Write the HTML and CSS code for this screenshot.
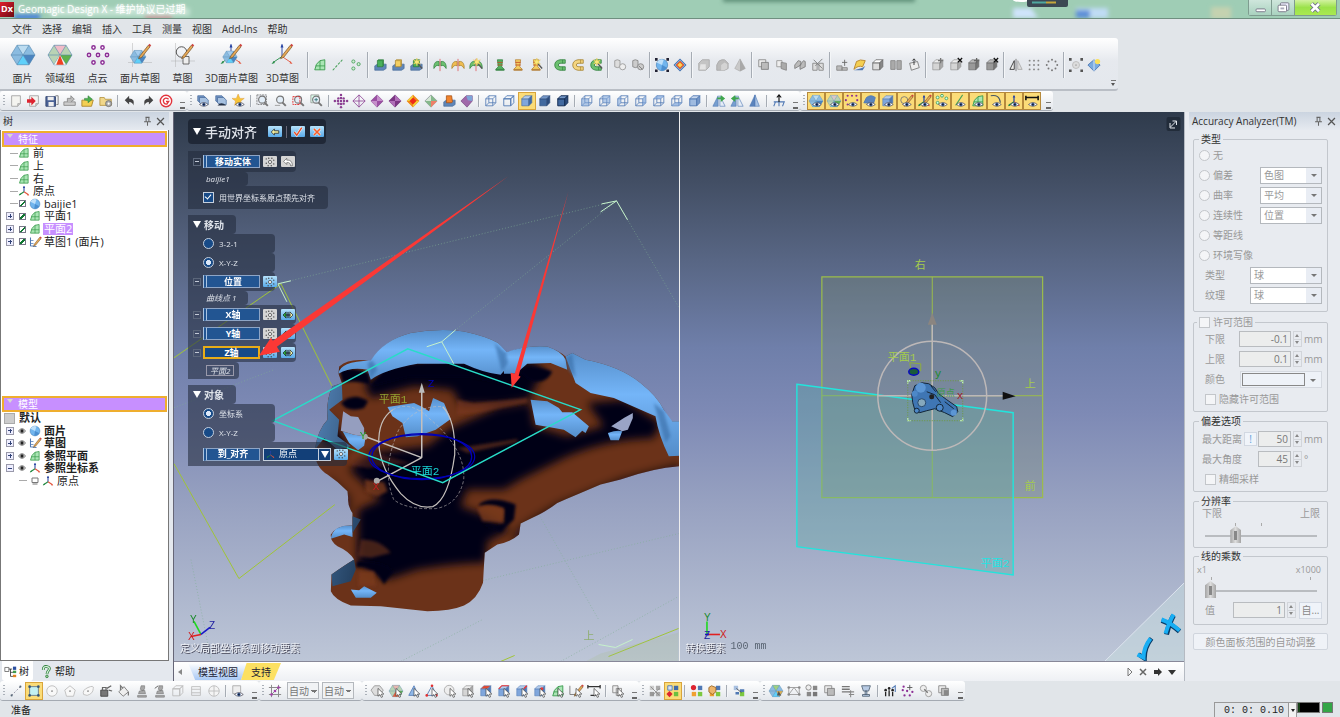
FILE: index.html
```html
<!DOCTYPE html>
<html lang="zh-CN">
<head>
  <title>Geomagic Design X</title>
  <meta charset="UTF-8" />
  <link rel="stylesheet" href="styles.css">
</head>
<body>
  <header class="titlebar">
    <svg class="titlebar-glass" viewBox="0 0 1340 18" preserveAspectRatio="xMaxYMin slice">
      <defs><filter id="soft"><feGaussianBlur stdDeviation="2"/></filter></defs>
      <g filter="url(#soft)">
        <rect x="723" y="-4" width="192" height="6" fill="#5f8f78"/>
        <rect x="14" y="14" width="26" height="6" fill="#4a83d8"/>
        <rect x="145" y="13" width="27" height="6" fill="#d06a80"/>
        <path d="M50 8h140v8H50z" fill="#c2e2d2"/>
        <path d="M1013 8h18l7 10h-25z" fill="#cfe4fb"/>
        <path d="M1076 8h32v10h-32z" fill="#c0dcf5"/>
        <path d="M1076 10h14v8h-14z" fill="#5b8ed8"/>
        <path d="M1211 7h20v12h-20z" fill="#c5d2b0"/>
      </g>
      <ellipse cx="1021" cy="0" rx="8" ry="2" fill="#fff"/>
      <rect x="1027" y="-3" width="41" height="10" rx="2" fill="#3c4853"/>
      <path d="M1032 2.500h14" stroke="#4fa8a0" stroke-width="2"/>
      <path d="M1046 2.500h10" stroke="#c5a63c" stroke-width="2"/>
    </svg>
    <span class="app-logo">Dx</span>
    <h1>Geomagic Design X - 维护协议已过期</h1>
    <div class="win-buttons">
      <button aria-label="最小化"><svg viewBox="0 0 24 16"><rect x="7.500" y="9.500" width="10" height="3" rx="1" fill="#fff" stroke="#778"/></svg></button>
      <button aria-label="还原"><svg viewBox="0 0 24 16"><rect x="9" y="3" width="9" height="8" rx="1" fill="#eef" stroke="#778"/><rect x="6.500" y="5.500" width="9" height="7" rx="1" fill="#fff" stroke="#778"/><rect x="9" y="8" width="4" height="2" fill="#aab"/></svg></button>
      <button class="close" aria-label="关闭"><svg viewBox="0 0 24 16"><path d="M8 4l8 8M16 4l-8 8" stroke="#668" stroke-width="4.500"/><path d="M8 4l8 8M16 4l-8 8" stroke="#fff" stroke-width="2.800"/></svg></button>
    </div>
  </header>

  <nav class="menubar">
    <a href="#">文件</a><a href="#">选择</a><a href="#">编辑</a><a href="#">插入</a><a href="#">工具</a><a href="#">测量</a><a href="#">视图</a><a href="#">Add-Ins</a><a href="#">帮助</a>
  </nav>

  <div class="ribbon">
    <button class="big"><i data-icon="mesh"></i>面片</button>
    <button class="big"><i data-icon="regions"></i>领域组</button>
    <button class="big"><i data-icon="cloud"></i>点云</button>
    <button class="big"><i data-icon="meshSketch"></i>面片草图</button>
    <button class="big"><i data-icon="sketch"></i>草图</button>
    <button class="big"><i data-icon="meshSketch3d"></i>3D面片草图</button>
    <button class="big"><i data-icon="sketch3d"></i>3D草图</button>
    <div class="tools" data-icons="| plane vector points | extrude extrudeY extrudeWand | revolve revolveY revolveWand | loft loftY loftWand | sweep sweepY sweepWand | boolA boolB | fit target | chamfer fillet draft | union cut join trim | add surf shell split wrap | move delFace moveD delFaceD | mirror grid ring | bound diamondStar"></div>
    <span class="more"></span>
  </div>

  <div class="toolbar-row">
    <div class="bar" data-icons="page import save exportG open folderGear | undo redo refreshG"></div>
    <div class="bar" data-icons="layersEye layersHide starEye | zoomFit zoomOut zoomArea zoomIn | crossDots diaWire diaShade diaDark diaHeat diaCurv boxOr boxPu | wire hidden *shade shadeDark shadeEdge | vFront vBack vLeft vRight vTop vBottom vIso | flipA flipB flipC | normal"></div>
    <div class="bar lit" data-icons="*eMesh *eRegion *eCloud *eSurf *eSolid *eSketch *eSketch3 *ePoints *eLine *ePlane *eCurve *eAxis *eRuler"></div>
  </div>

  <main>
    <aside class="tree-panel">
      <h2 class="panel-head">树<span class="head-btns"><i data-icon="pin"></i><i data-icon="cross"></i></span></h2>
      <div class="tree-body">
        <h3 class="tree-head">特征</h3>
        <ul class="tree features">
          <li><b class="line"></b><i data-icon="plane"></i>前</li>
          <li><b class="line"></b><i data-icon="plane"></i>上</li>
          <li><b class="line"></b><i data-icon="plane"></i>右</li>
          <li><b class="line"></b><i data-icon="axis"></i>原点</li>
          <li><b class="line"></b><input type="checkbox" aria-label="baijie1" checked><i data-icon="ball"></i>baijie1</li>
          <li><b class="plus"></b><input type="checkbox" aria-label="平面1" checked><i data-icon="plane"></i>平面1</li>
          <li><b class="plus"></b><input type="checkbox" aria-label="平面2" checked><i data-icon="plane"></i><span class="sel">平面2</span></li>
          <li><b class="plus"></b><input type="checkbox" aria-label="草图1" checked><i data-icon="pen"></i>草图1 (面片)</li>
        </ul>
        <h3 class="tree-head">模型</h3>
        <ul class="tree models">
          <li class="root"><b class="box"></b>默认</li>
          <li><b class="plus"></b><i class="eye" data-icon="eyeSm"></i><i data-icon="ball"></i>面片</li>
          <li><b class="plus"></b><i class="eye" data-icon="eyeSm"></i><i data-icon="pen"></i>草图</li>
          <li><b class="plus"></b><i class="eye" data-icon="eyeSm"></i><i data-icon="plane"></i>参照平面</li>
          <li><b class="plus open"></b><i class="eye" data-icon="eyeSm"></i><i data-icon="axis"></i>参照坐标系</li>
          <li class="child"><b class="line"></b><i class="eye" data-icon="eyeOff"></i><i data-icon="axis"></i>原点</li>
        </ul>
      </div>
      <div class="side-tabs">
        <button class="on"><i data-icon="treeTab"></i>树</button>
        <button><i data-icon="help"></i>帮助</button>
      </div>
    </aside>

    <section class="center">
      <div class="views">
        <div class="view">
          <svg class="scene" viewBox="173 112 505 550" preserveAspectRatio="xMinYMin slice">
            <defs>
              <linearGradient id="steel" x1="0" y1="0" x2="0" y2="1"><stop offset="0" stop-color="#5790cc"/><stop offset=".4" stop-color="#74b5f8"/><stop offset="1" stop-color="#548dc9"/></linearGradient>
              <linearGradient id="steelDark" x1="0" y1="0" x2="1" y2="1"><stop offset="0" stop-color="#5484b8"/><stop offset="1" stop-color="#1f3a58"/></linearGradient>
              <filter id="shade" x="-10%" y="-10%" width="120%" height="120%"><feGaussianBlur stdDeviation="12"/></filter>
              <filter id="crease" x="-10%" y="-10%" width="120%" height="120%"><feGaussianBlur stdDeviation="4"/></filter>
              <clipPath id="body"><path id="bodyPath" d="M203 612L205 590Q240 562 300 575Q340 510 420 490Q500 475 580 485Q650 500 682 520L706 550Q760 525 830 530Q870 545 885 560L905 550L945 570Q1050 590 1110 640Q1160 680 1180 720L1200 755H1228V890Q1150 895 1050 930L990 945Q920 975 860 1000Q820 1030 790 1042L750 1062L745 1095Q720 1118 680 1125L642 1150L637 1240Q620 1290 580 1308Q540 1325 470 1325L330 1310L240 1308Q190 1290 180 1265L182 1215Q220 1188 250 1170Q235 1145 200 1130Q178 1115 180 1095Q200 1065 245 1068V1030Q230 1010 232 985L230 965Q200 935 170 915Q130 890 132 840Q140 780 170 750Q165 690 185 650L213 640Z"/></clipPath>
            </defs>
            <g fill="none" stroke="#7fae93" stroke-width="1" stroke-dasharray="1 2" opacity=".6">
              <path d="M277 284L616 201L678 307M440 342L616 201M440 342L598 620M173 408L273 370M482 581L678 534M190 560L210 660M560 662L678 597M400 662L482 620"/>
            </g>
            <path d="M173 358L280 284L331 386M173 464L238 579L334 505M500 662L514 656M608 657L678 629" fill="none" stroke="#a0c535"/>
            <path d="M600 654L678 633V662H585z" fill="#a5bd80" opacity=".2"/>
            <path d="M277 284L290 281M277 284L286 302M600 212L616 201L627 220M616 201L601 204M598 645L615 648L632 640" fill="none" stroke="#c6f2cb"/>
            <g transform="translate(270 170) scale(.3333)">
              <use href="#bodyPath" fill="#6b3219"/>
              <g clip-path="url(#body)">
                <g filter="url(#shade)" fill="#040414">
                  <path d="M340 610Q430 570 580 578L690 608L780 570L820 600L775 690L690 705H570L545 660L430 650L300 685L280 640Z"/>
                  <path d="M540 775L680 715L780 700L790 770L890 800L1000 770L950 700L1060 690L1170 760L1150 805Q1000 810 880 865L750 930L700 960L590 960L570 1010L640 1035L720 1080L650 1115L645 1180Q560 1180 440 1200L350 1230L260 1180L262 1020L330 990L235 900L300 850L470 830Z"/>
                  <path d="M180 740L205 790L240 840L150 830Z"/>
                  <path d="M1228 880L1050 925L860 1000L790 1042L740 1075L720 1130L800 1100L1228 940Z" opacity=".6"/>
                  <path d="M170 915L240 980L240 1040L190 1000Z" opacity=".5"/>
                </g>
                <g filter="url(#crease)" fill="#040414">
                  <path d="M340 600Q430 574 580 582L690 612L740 585L735 640L690 640L590 620H420L300 650Z"/>
                  <path d="M205 598Q250 592 295 610L298 645Q250 630 215 640Z"/>
                  <path d="M210 700Q250 665 292 695L280 715Q250 725 225 715Z"/>
                  <path d="M625 1005Q660 975 735 1005L730 1050L690 1088L635 1065Q670 1070 700 1062L700 1015Q660 1000 625 1010Z"/>
                  <path d="M258 1175Q330 1172 368 1205L340 1245L318 1212Q285 1185 255 1195Z"/>
                  <path d="M750 600Q800 585 845 605Q830 640 790 635Q760 625 750 600Z"/>
                </g>
                <g fill="#7a3a1e" opacity=".8" filter="url(#crease)">
                  <path d="M560 690L610 700L770 685V700L620 730L560 735Z" opacity=".8"/>
                  <path d="M560 835L740 808L740 818L590 850Z" opacity=".7"/>
                  <path d="M620 1015Q660 1000 700 1020L695 1058L635 1055Z"/>
                  <path d="M282 930L340 938L350 965L320 980L285 968Z"/>
                  <path d="M245 850L300 845L420 880L290 895L230 885Z" opacity=".5"/>
                  <path d="M265 1205L310 1205L315 1250L262 1250Z"/>
                  <path d="M270 1110Q330 1110 360 1150L300 1165L262 1160Z" opacity=".7"/>
                </g>
              </g>
              <g fill="url(#steel)">
                <path d="M203 612Q205 575 300 572Q340 510 420 490Q500 475 580 485Q650 500 682 520L710 550L715 585L690 615Q640 610 580 582H440Q340 600 300 630L290 600Q240 590 203 612Z"/>
                <path d="M700 550Q760 525 830 530Q875 545 885 570L890 600L840 580L770 582L735 612H700Z"/>
                <path d="M885 560L905 550L945 570Q1050 590 1110 640Q1160 680 1180 720L1205 755H1228V858L1195 860Q1165 800 1155 740Q1110 720 1030 685L960 670L915 640Z"/>
                <path d="M350 712L430 700L455 712L475 725L487 685L520 700L540 748L495 780L440 800L405 803L395 760L365 740Z"/>
                <path d="M780 690L830 695L865 715L875 728L905 728L955 770L945 790L935 783L915 803L880 780L795 765Z"/>
                <path d="M1012 790Q1040 780 1055 785L1045 812L1020 812Z"/>
                <path d="M215 785L250 795L285 800L280 828L262 842L235 820Z"/>
                <path d="M240 1260L265 1262L280 1250L318 1270L300 1285H255Z"/>
                <path d="M180 1108Q185 1065 245 1068V1102L220 1095Z"/>
              </g>
              <g fill="#3d72ac" filter="url(#crease)" opacity=".7">
                <path d="M290 580L305 572L320 600L300 625ZM672 520L706 550L712 580L694 606Z"/>
                <path d="M885 565L905 552L915 625L895 600ZM1150 700L1180 725L1200 800L1185 820Z"/>
              </g>
              <path d="M132 840Q140 780 170 750Q165 690 185 650L213 640L215 690L175 720L205 750L200 800L240 830L200 840L160 805ZM182 1215Q220 1188 250 1170L255 1200L240 1235L185 1250ZM245 1040L270 1050L245 1090Z" fill="url(#steelDark)"/>
              <path d="M217 725L240 740L262 742L280 775V800L250 795L210 783Z" fill="#959ebf"/>
              <path d="M1087 730V745L1072 780L1055 785L1022 770L1060 745Z" fill="#9aa4c6"/>
            </g>
            <path d="M426 347L441 342L455 330M441 342L453 364" fill="none" stroke="#c6f2cb"/>
            <g fill="none" stroke="#c5c0bd" stroke-width="1.500">
              <path d="M421 458V390M421 458L365 437M421 458L376 482"/>
              <path d="M392 410Q377 420 378 445Q380 470 400 494Q415 510 432 507Q448 500 454 455Q455 420 442 407" stroke-width="1.200"/>
              <path d="M392 410Q410 400 430 420Q465 450 463 480Q458 505 435 509Q405 510 393 500Q380 470 398 430Q415 405 442 407" stroke-width="1" stroke-dasharray="3 2" opacity=".6"/>
            </g>
            <g fill="none" stroke="#0000b8" stroke-width="1.200"><ellipse cx="421" cy="457" rx="53" ry="22"/><ellipse cx="421" cy="457" rx="50" ry="23"/></g>
            <path d="M421 383l3 10h-6z" fill="#bbb"/><circle cx="364" cy="437" r="3" fill="#aaa"/><circle cx="376" cy="481" r="3" fill="#aaa"/>
            <path d="M272 421L407 349L580 410L442 483Z" fill="none" stroke="#28dcc8" stroke-width="1.400"/>
            <g class="tag">
              <text x="378" y="403" fill="#93a332">平面1</text>
              <text x="410" y="475" fill="#18d8da">平面2</text>
              <text x="583" y="641" fill="#8fae72">上</text>
              <text x="427" y="387" fill="#0000b8">Z</text>
              <text x="359" y="439" fill="#22a030">Y</text>
              <text x="372" y="490" fill="#c02020">X</text>
            </g>
            <g fill="none" stroke-width="1.600"><path d="M200 635L193 622" stroke="#1ed81e"/><path d="M200 635L190 637" stroke="#e02020"/><path d="M200 635L209 628" stroke="#1818c8"/></g>
            <g class="tag small"><text x="189" y="624" fill="#188a28">Y</text><text x="187" y="641" fill="#d01818">X</text><text x="208" y="630" fill="#1c1ca0">Z</text></g>
          </svg>

          <form class="align">
            <div class="r title"><span class="tri"></span><strong>手动对齐</strong><button type="button" class="mini blue" aria-label="返回"><i data-icon="back"></i></button><em class="bar-sep"></em><button type="button" class="mini blue" aria-label="确定"><i data-icon="ok"></i></button><button type="button" class="mini blue" aria-label="取消"><i data-icon="no"></i></button></div>
            <div class="group">
              <div class="r w2 h20"><span class="fold"></span><button type="button" class="slot">移动实体</button><button type="button" class="mini" aria-label="清除"><i data-icon="dots"></i></button><button type="button" class="mini" aria-label="撤消"><i data-icon="curl"></i></button></div>
              <div class="r w0 note">baijie1</div>
              <label class="r w3 h23"><input type="checkbox" checked>用世界坐标系原点预先对齐</label>
            </div>
            <div class="group">
              <div class="r w0 head"><span class="tri"></span><strong>移动</strong></div>
              <label class="r w1"><input type="radio" name="mv">3-2-1</label>
              <label class="r w1"><input type="radio" name="mv" checked>X-Y-Z</label>
              <div class="r w1"><span class="fold"></span><button type="button" class="slot">位置</button><button type="button" class="mini blue" aria-label="清除"><i data-icon="dots"></i></button></div>
              <div class="r w0 note">曲线点 1</div>
              <div class="r w2"><span class="fold"></span><button type="button" class="slot">X轴</button><button type="button" class="mini" aria-label="清除"><i data-icon="dots"></i></button><button type="button" class="mini blue" aria-label="反转"><i data-icon="swap"></i></button></div>
              <div class="r w2"><span class="fold"></span><button type="button" class="slot">Y轴</button><button type="button" class="mini" aria-label="清除"><i data-icon="dots"></i></button><button type="button" class="mini blue" aria-label="反转"><i data-icon="swap"></i></button></div>
              <div class="r w2"><span class="fold"></span><button type="button" class="slot focus">Z轴</button><button type="button" class="mini blue" aria-label="清除"><i data-icon="dots"></i></button><button type="button" class="mini blue" aria-label="反转"><i data-icon="swap"></i></button></div>
              <div class="r w0 note last"><span>平面2</span></div>
            </div>
            <div class="group">
              <div class="r w0 head"><span class="tri"></span><strong>对象</strong></div>
              <label class="r w1"><input type="radio" name="obj" checked>坐标系</label>
              <label class="r w1"><input type="radio" name="obj">X-Y-Z</label>
              <div class="r w4"><span class="fold none"></span><button type="button" class="slot">到_对齐</button><span class="pick"><i data-icon="axis"></i><select aria-label="到_对齐"><option>原点</option></select></span><button type="button" class="mini blue" aria-label="清除"><i data-icon="dots"></i></button></div>
            </div>
          </form>

          <svg class="scene over" viewBox="173 112 505 550" preserveAspectRatio="xMinYMin slice">
            <g fill="#fb3835"><path d="M508 176L272 341L270 338L258 356L279 352L276 347Z"/><path d="M568 191L514 374L510 373L511 388L520 377L518 376Z"/></g>
          </svg>
          <p class="hint">定义局部坐标系到移动要素</p>
        </div>

        <div class="view">
          <svg class="scene" viewBox="679 112 505 550" preserveAspectRatio="xMidYMin slice">
            <path d="M821 277H1042V498H821Z" fill="#7f8f68" fill-opacity=".27" stroke="#9cbd4a" stroke-width="1.200"/>
            <path d="M931.500 277V498M821 396H1042" stroke="#9cbd4a"/>
            <path d="M796 384.500L1012.500 413V575.500L796 547Z" fill="#58b0a0" fill-opacity=".3" stroke="#22e4dc" stroke-width="1.400"/>
            <g fill="none" stroke="#bdb8b8" stroke-width="1.500"><circle cx="931.500" cy="396" r="54.500"/><path d="M931.500 321V451M877 396H1005"/></g>
            <path d="M931.500 313l4.500 12h-9z" fill="#8a8580"/><path d="M1002 392v8l13-3.500z" fill="#111"/>
            <g>
              <path d="M911 395L914 386L921 383L928 384L934 388L938 394L946 400L956 407L957 412L952 417L944 413L934 409L926 411L919 413L914 410L912 403Z" fill="#3f76b4" stroke="#142638"/>
              <circle cx="920" cy="388" r="5" fill="#5c96d4"/><circle cx="914" cy="394" r="3" fill="#4d88c8"/><circle cx="921" cy="403" r="4" fill="#85a8bd" stroke="#27486c"/><circle cx="939" cy="408" r="3.500" fill="#4d88c8" stroke="#142638"/><circle cx="916" cy="411" r="2.500" fill="#4d88c8" stroke="#142638"/>
              <circle cx="953" cy="413" r="3" fill="#5c96d4"/><path d="M926 392l8 3 6 8M930 386l5 6M944 402l9 7" stroke="#142638" fill="none"/><circle cx="931" cy="397" r="2.500" fill="#222"/>
            </g>
            <path d="M907 384v-3h3M959 381h3v3M962 418v3h-3M910 421h-3v-3" fill="none" stroke="#c6f2cb" stroke-width="1.300"/>
            <path d="M907 381H962V421H907Z" fill="none" stroke="#6d9a3c" stroke-dasharray="1 1.500"/>
            <path d="M909 363l11 1v7l-10-1z" fill="none" stroke="#8fae3c"/><ellipse cx="913" cy="372" rx="5" ry="3.500" fill="#1a5a3a" stroke="#0808c0" stroke-width="1.500"/>
            <g class="tag">
              <text x="914" y="269" fill="#a5cc4c">右</text><text x="1024" y="388" fill="#a5cc4c">上</text><text x="1024" y="490" fill="#a5cc4c">前</text>
              <text x="887" y="361" fill="#a5cc4c">平面1</text><text x="980" y="567" fill="#22e4e4">平面2</text>
              <text class="org" x="936" y="396" fill="#3f9a4c">原点</text><text x="934" y="377" fill="#188a28">y</text><text x="956" y="399" fill="#a01c28">x</text>
            </g>
            <g fill="none" stroke-width="1.600"><path d="M706 635V622" stroke="#1ed81e"/><path d="M706 635H719" stroke="#e02020"/><path d="M704 635h4" stroke="#1818c8"/></g>
            <g class="tag small"><text x="703" y="622" fill="#188a28">Y</text><text x="719" y="639" fill="#d01818">X</text><text x="703" y="640" fill="#1c1ca0">Z</text></g>
            <path d="M1184 583V662H1104Z" fill="#c6dadf" opacity=".55"/><path d="M1184 583L1104 662" stroke="#dde4ee"/>
            <path d="M1161 621Q1170 624 1179 632M1173 616Q1168 625 1166 635" stroke="#083a66" stroke-width="5" fill="none"/><path d="M1161 620Q1170 623 1179 631M1173 615Q1168 624 1165 634" stroke="#18aef4" stroke-width="4" fill="none"/>
            <path d="M1138 655L1144 659Q1144 648 1151 639" stroke="#083a66" stroke-width="4.500" fill="none"/><path d="M1137 655L1143 658Q1143 648 1150 639" stroke="#18aef4" stroke-width="4" fill="none"/>
            <rect x="1166" y="117" width="14" height="14" rx="2" fill="#222c3a"/><path d="M1170 127l6-6M1172 121h4v4M1169.500 123v5h5" stroke="#e4e8ee" fill="none"/>
          </svg>
          <p class="hint">转换要素<span>100 mm</span></p>
        </div>
      </div>
      <div class="doc-tabs">
        <span class="nav-l"></span>
        <button class="model">模型视图</button>
        <button class="support">支持</button>
        <svg viewBox="0 0 54 12"><path d="M3 2v8l4-4z" fill="none" stroke="#777"/><path d="M15 3l6 6M21 3l-6 6" stroke="#666" stroke-width="1.500"/><path d="M29 4h4V2l4 4-4 4V8h-4z" fill="#333"/><path d="M43 4h8l-4 5z" fill="#333"/></svg>
      </div>
    </section>

    <aside class="analyzer">
      <h2 class="panel-head">Accuracy Analyzer(TM)<span class="head-btns"><i data-icon="pin"></i><i data-icon="cross"></i></span></h2>
      <form>
        <fieldset>
          <legend>类型</legend>
          <div class="row"><label><input type="radio" name="t" disabled>无</label></div>
          <div class="row"><label><input type="radio" name="t" disabled>偏差</label><span class="combo"><select aria-label="偏差" disabled><option>色图</option></select></span></div>
          <div class="row"><label><input type="radio" name="t" disabled>曲率</label><span class="combo"><select aria-label="曲率" disabled><option>平均</option></select></span></div>
          <div class="row"><label><input type="radio" name="t" disabled>连续性</label><span class="combo"><select aria-label="连续性" disabled><option>位置</option></select></span></div>
          <div class="row"><label><input type="radio" name="t" disabled>等距线</label></div>
          <div class="row"><label><input type="radio" name="t" disabled>环境写像</label></div>
          <div class="row in"><label for="envType">类型</label><span class="combo wide"><select id="envType" disabled><option>球</option></select></span></div>
          <div class="row in"><label for="envTex">纹理</label><span class="combo wide"><select id="envTex" disabled><option>球</option></select></span></div>
        </fieldset>
        <fieldset class="allow">
          <legend class="dim"><label><input type="checkbox" disabled>许可范围</label></legend>
          <div class="row in"><label for="lo">下限</label><span class="num w52"><input id="lo" value="-0.1" disabled><b class="spin"></b></span><span class="unit">mm</span></div>
          <div class="row in"><label for="hi">上限</label><span class="num w52"><input id="hi" value="0.1" disabled><b class="spin"></b></span><span class="unit">mm</span></div>
          <div class="row in"><label for="col">颜色</label><span class="combo color"><button type="button" id="col" aria-label="颜色" disabled></button></span></div>
          <div class="row in"><label><input type="checkbox" disabled>隐藏许可范围</label></div>
        </fieldset>
        <fieldset class="dev">
          <legend>偏差选项</legend>
          <div class="row mid"><label for="dist">最大距离</label><button type="button" class="bang" disabled>!</button><span class="num w33"><input id="dist" value="50" disabled><b class="spin"></b></span><span class="unit">mm</span></div>
          <div class="row mid"><label for="ang">最大角度</label><span class="num w33"><input id="ang" value="45" disabled><b class="spin"></b></span><span class="unit">°</span></div>
          <div class="row in"><label><input type="checkbox" disabled>精细采样</label></div>
        </fieldset>
        <fieldset class="res">
          <legend>分辨率</legend>
          <div class="ends"><span>下限</span><span>上限</span></div>
          <input type="range" aria-label="分辨率" value="25" disabled>
        </fieldset>
        <fieldset class="mult">
          <legend>线的乘数</legend>
          <div class="ends far"><span>x1</span><span>x1000</span></div>
          <input type="range" aria-label="线的乘数" value="0" disabled>
          <div class="row in"><label for="val">值</label><span class="num w52"><input id="val" value="1" disabled><b class="spin"></b></span><button type="button" class="auto" disabled>自...</button></div>
        </fieldset>
        <button type="button" class="adjust" disabled>颜色面板范围的自动调整</button>
      </form>
    </aside>
  </main>

  <div class="toolbar-row bottom">
    <div class="bar" data-icons="segment *rect circleG polyG ellipseG spray bucket stampA stampB cubeG cylG ballG | pageEye"></div>
    <div class="bar filter"><button class="tool" aria-label="过滤"><i data-icon="filter"></i></button><select class="auto-sel" aria-label="过滤一"><option>自动</option></select><select class="auto-sel" aria-label="过滤二"><option>自动</option></select></div>
    <div class="bar" data-icons="cMesh cRegion cTri cTriR cBall cBox cFace cEdge cLine cPoint cPlane cPen cRuler | cPages"></div>
    <div class="bar" data-icons="sqOff *sqOn | sqRed sqHand | sqTree"></div>
    <div class="bar" data-icons="meshBall nodes sqG union list cup | bars cloudM linkG cutG"></div>
  </div>

  <footer class="status">
    <span>准备</span>
    <div class="clock"><output>0: 0: 0.10</output><button aria-label="选项"></button></div>
    <span class="meter"></span><span class="meter green"></span>
  </footer>

  <script src="icons.js"></script>
</body>
</html>
```
FILE: styles.css
```css
* { box-sizing: border-box; }
body {
  margin: 0; height: 100vh; display: flex; flex-direction: column; overflow: hidden;
  background: #e1e5e9; color: #222; font: 10px/12px "Open Sans", "Noto Sans CJK SC", sans-serif;
}
button, input, select { font: inherit; color: inherit; margin: 0; }
button { border: 0; padding: 0; background: none; white-space: nowrap; }
h1, h2, h3, p, ul { margin: 0; padding: 0; font-weight: normal; font-size: 10px; }
i { display: block; flex: none; width: 14px; height: 14px; }
i svg { display: block; width: 100%; height: 100%; overflow: visible; }

/* title bar */
.titlebar { position: relative; display: flex; align-items: center; height: 19px; flex: none; background: #9fcdb5; border-bottom: 1px solid #6f8f80; overflow: hidden; }
.titlebar-glass { position: absolute; top: 0; left: 0; width: 100%; height: 18px; }
.app-logo { position: relative; width: 14px; height: 15px; background: linear-gradient(135deg, #e0202c, #6d0a14); color: #fff; font-weight: bold; font-size: 9px; line-height: 14px; text-align: center; }
.titlebar h1 { position: relative; margin-left: 4px; color: #fff; text-shadow: 0 0 3px #fff; }
.win-buttons { position: relative; display: flex; margin: 0 3px 2px auto; height: 16px; border: 1px solid #7f9c90; border-top: 0; border-radius: 0 0 3px 3px; }
.win-buttons button { width: 23px; background: linear-gradient(#cfe6dc, #a9d2bf); border-right: 1px solid #7f9c90; }
.win-buttons svg { display: block; height: 15px; margin: auto; }
.win-buttons .close { width: 41px; border: 0; background: linear-gradient(#d2f2a0, #9be24a 50%, #a9ea50); }

/* menu and ribbon */
.menubar { height: 19px; flex: none; display: flex; align-items: center; gap: 10px; padding-left: 12px; }
.menubar a { color: #333; text-decoration: none; }
.ribbon { position: relative; display: flex; align-self: flex-start; align-items: stretch; height: 53px; flex: none; padding: 0 15px 0 4px; background: linear-gradient(#fff, #e6e9ee 45%, #e4e8ed); border-bottom: 2px solid #b9bec5; border-radius: 0 3px 3px 0; }
.big { display: flex; flex-direction: column; align-items: center; justify-content: space-between; min-width: 37px; padding: 4px 4px 5px; color: #333; }
.big i { width: 24px; height: 26px; }
.tools { display: flex; align-items: center; padding: 2px 0 0 2px; }
.tool { width: 18px; height: 18px; display: flex; align-items: center; justify-content: center; flex: none; }
.sep { width: 2px; height: 26px; margin: 0 2px; flex: none; border-left: 1px solid #a6acb4; background: #f4f6f8; }
.more { position: absolute; right: 2px; bottom: 3px; }
.more, .bar::after { width: 5px; height: 6px; background: linear-gradient(#777, #777) 0 0/5px 1px no-repeat; }
.more::after, .bar::before { content: ""; }
.more::after { position: absolute; top: 3px; left: 0; border: 3px solid transparent; border-width: 3px 2px 0; border-top-color: #555; }

.toolbar-row { display: flex; flex: none; height: 21px; }
.bar { display: flex; align-items: center; height: 20px; padding-left: 3px; background: linear-gradient(#fff, #e3e7ec); border-bottom: 1px solid #a4aab2; border-radius: 3px; }
.bar::before { width: 2px; height: 12px; margin-right: 2px; background: repeating-linear-gradient(#aab0b8 0 1px, transparent 1px 3px); }
.bar::after { content: ""; align-self: flex-end; margin: 0 2px 1px 5px; border-bottom: 2px solid #666; height: 5px; }
.bar .sep { height: 12px; }
.tool.active { height: 18px; border: 1px solid #d9a53c; background: #fbdc78; }
.lit .tool.active { border-color: #b68a3c; }

/* main columns */
main { display: flex; flex: 1; min-height: 0; }
.panel-head { display: flex; align-items: center; justify-content: space-between; height: 18px; padding: 0 3px; background: linear-gradient(#cbd4e0, #e6eaf0); color: #333; white-space: nowrap; }
.head-btns { display: flex; gap: 2px; }
.head-btns i { width: 11px; height: 11px; }
.tree-panel { width: 173px; flex: none; display: flex; flex-direction: column; background: #e4e8ee; padding-right: 4px; }
.tree-body { flex: 1; display: flex; flex-direction: column; border: 1px solid #777; border-width: 0 1px 1px; background: #fff; }
.tree-head { height: 16px; flex: none; margin: 1px 1px 0; border: 2px solid #efae2e; background: #c78fff; color: #fff; padding-left: 14px; line-height: 13px; position: relative; }
.tree-head::before { content: ""; position: absolute; left: 3px; top: 1px; border: 3px solid transparent; border-width: 4px 3px 0; border-top-color: #d9d9d0; }
.tree { list-style: none; display: grid; grid-auto-rows: 1fr; font-size: 11px; color: #222; }
.features { height: 101px; margin: 0 0 147px; }
.models { height: 75px; font-weight: bold; }
.tree li { display: flex; align-items: center; padding-left: 5px; white-space: nowrap; line-height: 12px; }
.tree li i { width: 12px; height: 12px; margin-right: 3px; }
.tree li i.eye { width: 8px; height: 8px; margin: 0 3px 0 4px; }
.line { width: 8px; height: 1px; margin-left: 4px; background: #aaa; flex: none; }
.plus { width: 8px; height: 8px; flex: none; border: 1px solid #99a; background: linear-gradient(#347, #347) 1px 50%/4px 1px no-repeat, linear-gradient(#347, #347) 50% 1px/1px 4px no-repeat, #eef; }
.plus.open { background: linear-gradient(#347, #347) 1px 50%/4px 1px no-repeat, #eef; }
.plus + input { margin: 0 3px 0 5px; }
.line + input { margin: 0 3px 0 1px; }
.tree input { appearance: none; width: 7px; height: 7px; flex: none; border: 1px solid #778; background: linear-gradient(135deg, transparent 40%, #173 40% 65%, transparent 65%); }
.tree .sel { background: #c78fff; color: #fff; padding: 0 1px; margin-left: -1px; }
.tree .box { width: 11px; height: 11px; margin: 0 4px 0 -2px; background: #ccc; border: 1px solid #aaa; }
.tree .child { padding-left: 14px; font-weight: normal; }
.side-tabs { display: flex; height: 20px; flex: none; padding-left: 2px; }
.side-tabs button { display: flex; align-items: center; gap: 2px; padding: 0 4px 0 2px; }
.side-tabs .on { background: #fff; border-radius: 0 0 3px 3px; margin-right: 5px; }
.side-tabs i { width: 13px; height: 13px; }

/* model views */
.center { flex: 1; display: flex; flex-direction: column; min-width: 0; border-left: 1px solid #667; }
.views { flex: 1; display: flex; gap: 1px; min-height: 0; background: #eee; border-bottom: 1px solid #889; }
.view { position: relative; flex: 1; min-width: 0; overflow: hidden; background: linear-gradient(#2f3b4c, #434f65 13%, #586684 27%, #6f7faa 43%, #7e8ab5 55%, #98a2c1 72%, #bdc6d7); }
.scene { position: absolute; left: 0; top: 0; width: 100%; height: 100%; }
.over { pointer-events: none; }
.tag text { font: 11px "Liberation Mono", "Noto Sans CJK SC", monospace; }
.tag .org { font-size: 9px; }
.tag.small text { font: 10px "Liberation Sans", sans-serif; }
.hint { position: absolute; left: 6px; bottom: 5px; color: #eef0f5; text-shadow: 1px 1px 0 #445; font: 10px/12px "Liberation Mono", "Noto Sans CJK SC", monospace; }
.hint span { color: #5a6573; text-shadow: none; margin-left: 5px; vertical-align: 3px; }

/* align form */
.align { position: absolute; left: 14px; top: 7px; color: #dfe3ea; font-size: 8px; }
.align .r { display: flex; align-items: center; height: 19px; width: 108px; padding-left: 5px; gap: 3px; background: rgba(34, 43, 60, .58); border-radius: 0 4px 4px 0; white-space: nowrap; }
.align .group { margin-bottom: 6px; }
.align .title { width: 138px; height: 25px; margin-bottom: 7px; border-radius: 4px; background: rgba(20, 26, 38, .65); gap: 4px; }
.title strong { font-size: 13px; font-weight: 500; margin-right: 7px; }
.tri { border: 4px solid transparent; border-width: 7px 4px 0; border-top-color: #fff; }
.bar-sep { width: 1px; height: 12px; background: #667; }
.align .w0 { width: 48px; } .align .w1 { width: 87px; } .align .w3 { width: 140px; } .align .w4 { width: 159px; height: 24px; }
.align .h20 { height: 21px; } .align .h23 { height: 23px; }
.head strong { font-size: 10px; }
.align .note { height: 14px; padding-left: 18px; font-style: italic; font-size: 8px; width: 60px; }
.align .note.last { width: 51px; height: 17px; }
.note.last span { border: 1px solid #99a; padding: 0 3px; line-height: 9px; }
.fold { width: 8px; height: 8px; border: 1px solid #5b667a; background: linear-gradient(#c3c9d6, #c3c9d6) 50% 50%/4px 1px no-repeat; margin-right: -1px; flex: none; }
.fold.none { visibility: hidden; }
.slot { width: 57px; height: 13px; flex: none; border: 1px solid #8ea5c6; border-left: 4px double #aac4e2; background: #225592; color: #fff; font-size: 9px; font-weight: bold; line-height: 10px; }
.slot.focus { border: 2px solid #e8ac18; background: #174a87; line-height: 9px; }
.mini { width: 14px; height: 11px; flex: none; background: #d5d5d5; border-radius: 1px; display: flex; justify-content: center; align-items: center; }
.mini + .mini { margin-left: 1px; }
.mini.blue { background: linear-gradient(#b6e2fb, #58aaea); }
.mini i { width: 10px; height: 10px; }
.align label input { appearance: none; width: 11px; height: 11px; margin: 0 2px 0 10px; flex: none; background: #174a87; border: 1px solid #c5cfdd; }
.align label input[type=radio] { border-radius: 50%; }
.align input[type=radio]:checked { background: radial-gradient(#dde8f8 35%, #174a87 42%); }
.align input[type=checkbox] { position: relative; }
.align input[type=checkbox]::after { content: ""; position: absolute; left: 2px; top: 0; width: 3px; height: 5px; border: solid #fff; border-width: 0 1px 1px 0; transform: rotate(40deg); }
.pick { position: relative; }
.pick i { position: absolute; left: 3px; top: 2px; width: 9px; height: 9px; }
.pick::after { content: ""; position: absolute; right: 2px; top: 3px; border: 4px solid transparent; border-width: 7px 4px 0; border-top-color: #fff; pointer-events: none; }
.pick select { display: block; appearance: none; width: 68px; height: 13px; padding: 0 0 0 15px; border: 1px solid #c5cfdd; border-radius: 0; background: linear-gradient(#c5cfdd, #c5cfdd) 54px 0/1px 100% no-repeat, #123f78; color: #fff; font-size: 9px; line-height: 10px; }

.doc-tabs { display: flex; align-items: center; height: 19px; flex: none; background: linear-gradient(#fff, #eef0f4); padding: 0 5px 0 4px; }
.nav-l { border: 3px solid transparent; border-width: 3px 4px 3px 0; border-right-color: #888; margin-right: 6px; }
.doc-tabs button { height: 17px; color: #223; }
.doc-tabs .model { width: 60px; background: linear-gradient(#fff, #a8c8f4); clip-path: polygon(0 0, 100% 0, 88% 100%, 12% 100%); }
.doc-tabs .support { width: 40px; margin-left: -7px; background: #fce062; clip-path: polygon(14% 0, 100% 0, 82% 100%, 0 100%); }
.doc-tabs svg { width: 54px; height: 12px; margin-left: auto; }

/* accuracy analyzer */
.analyzer { width: 156px; flex: none; padding-left: 4px; background: #e8ebf0; border-left: 1px solid #b5bac2; }
.analyzer form { padding: 3px 12px 0 4px; color: #999; }
fieldset { min-width: 0; margin: 0 0 4px; padding: 0 5px 6px 5px; border: 1px solid #c3c7cd; border-radius: 2px; }
legend { padding: 0 2px; margin-left: 0; color: #333; line-height: 12px; }
legend.dim { color: #999; margin-left: -2px; }
.row { display: flex; align-items: center; height: 20px; }
.row label, legend label { display: flex; align-items: center; gap: 3px; white-space: nowrap; }
.in { padding-left: 6px; }
.mid { padding-left: 3px; }
.analyzer input[type=radio], .analyzer input[type=checkbox] { appearance: none; width: 11px; height: 11px; flex: none; border: 1px solid #c3c6ca; background: #f4f5f7; }
.analyzer input[type=radio] { border-radius: 50%; }
.combo { position: relative; width: 62px; margin-left: auto; }
.combo.wide { width: 72px; }
.combo::after { content: ""; position: absolute; right: 5px; top: 7px; border: 2px solid transparent; border-width: 3px 3px 0; border-top-color: #777; }
.combo select { display: block; appearance: none; width: 100%; height: 17px; padding: 0 3px; border: 1px solid #b4b8bd; border-radius: 0; background: linear-gradient(#e9edf4, #e9edf4) 100% 0/15px 100% no-repeat, #fff; color: #999; opacity: 1; }
.combo.color { width: 82px; height: 17px; border: 1px solid #d5d9e0; background: #eef2f8; padding: 1px; }
.combo.color button { display: block; width: 63px; height: 13px; border: 1px solid #888; }
.num { display: flex; margin-left: auto; }
.num input { width: 52px; height: 16px; padding: 0 2px; border: 1px solid #b9bcc0; background: #eceded; text-align: right; color: #777; }
.w33 input { width: 33px; }
.spin { position: relative; width: 9px; margin-left: 2px; border: 1px solid #d2d5da; background: linear-gradient(#d2d5da, #d2d5da) 0 50%/100% 1px no-repeat; }
.spin::before, .spin::after { content: ""; position: absolute; left: 1px; border: 2px solid transparent; }
.spin::before { top: 2px; border-width: 0 2px 3px; border-bottom-color: #888; }
.spin::after { bottom: 2px; border-width: 3px 2px 0; border-top-color: #888; }
.unit { width: 18px; margin-left: 2px; }
.allow { padding-top: 1px; padding-bottom: 2px; margin-bottom: 3px; }
.dev { padding-top: 2px; padding-bottom: 2px; margin-bottom: 3px; }
.bang { width: 13px; height: 14px; margin-left: 2px; border: 1px solid #d2d8e2; background: #f0f4fa; color: #5aa0dc; }
.res, .mult { margin-bottom: 2px; }
.res { padding-bottom: 2px; }
.mult { padding-bottom: 4px; }
.ends { display: flex; justify-content: space-between; padding: 0 2px 0 3px; height: 14px; }
.ends.far { padding: 2px 1px 0 0; margin-left: -2px; font-size: 9px; }
.analyzer input[type=range] { appearance: none; display: block; width: 112px; height: 24px; margin: 0 0 0 6px; background: linear-gradient(#aaa, #aaa) 27% 2px/1px 3px no-repeat, linear-gradient(#aaa, #aaa) 50% 2px/1px 3px no-repeat, linear-gradient(#b9bcc0, #b9bcc0) 0 14px/100% 2px no-repeat; }
.mult input[type=range] { background: linear-gradient(#aaa, #aaa) 5% 1px/1px 3px no-repeat, linear-gradient(#aaa, #aaa) 95% 1px/1px 3px no-repeat, linear-gradient(#b9bcc0, #b9bcc0) 0 14px/100% 2px no-repeat; }
input[type=range]::-webkit-slider-thumb { appearance: none; width: 11px; height: 17px; margin-top: 3px; background: linear-gradient(#888, #888) 50% 60%/3px 9px no-repeat, linear-gradient(90deg, #a4a4a4, #ddd, #a4a4a4); clip-path: polygon(50% 0, 100% 25%, 100% 100%, 0 100%, 0 25%); }
.auto { width: 23px; height: 17px; margin-left: 3px; border: 1px solid #d2d8e2; background: #eff3f9; color: #888; }
.adjust { width: 100%; height: 17px; margin-top: 6px; border: 1px solid #d0d5dd; border-radius: 2px; background: #eff2f7; color: #999; }

/* bottom */
.auto-sel { width: 32px; height: 17px; margin-right: 3px; padding: 0 0 0 1px; border: 1px solid #b4b8bd; border-radius: 0; background: #f1f3f5; color: #777; appearance: none; background-image: linear-gradient(45deg, transparent 50%, #777 50%), linear-gradient(-45deg, transparent 50%, #777 50%); background-size: 3px 3px; background-position: 23px 7px, 26px 7px; background-repeat: no-repeat; }
.filter::after { visibility: hidden; margin: 0; }
.filter .tool { margin-right: 3px; }
.status { display: flex; height: 15px; flex: none; padding: 0 7px 0 11px; align-items: flex-start; font-size: 11px; line-height: 16px; }
.status > span:first-child { font-size: 10px; }
.clock { display: flex; justify-content: flex-end; width: 83px; height: 15px; margin-left: auto; border: 1px solid #999; border-width: 1px 1px 0; font: 10px/15px "Liberation Mono", monospace; }
.clock output { padding-right: 4px; }
.clock button { position: relative; width: 8px; border-left: 1px solid #999; background: #f2f2f2; }
.clock button::after { content: ""; position: absolute; left: 2px; top: 6px; border: 2px solid transparent; border-width: 3px 2px 0; border-top-color: #222; }
.meter { width: 23px; height: 11px; background: linear-gradient(90deg, #163f16 2px, #000 2px); border: 1px solid #777; }
.meter.green { width: 11px; margin-left: 2px; background: #33a546; }
```
FILE: icons.js
```js
// small drawing helpers, all on a 16x16 grid
const p = (d, fill = 'none', stroke = 'none', w = 1) => `<path d="${d}" fill="${fill}" stroke="${stroke}" stroke-width="${w}"/>`;
const c = (x, y, r, fill = 'none', stroke = 'none', w = 1) => `<circle cx="${x}" cy="${y}" r="${r}" fill="${fill}" stroke="${stroke}" stroke-width="${w}"/>`;
const B = '#4f78b4';

const cube = (front, top, side, edge, w = 1) => p('M2 5.500h8v8H2z', front, edge, w) + p('M2 5.500L5.500 2h8L10 5.500z', top, edge, w) + p('M10 5.500L13.500 2v8L10 13.500z', side, edge, w);
const wire = extra => p('M5.500 2h8v8h-8z', 'none', B, .9) + p('M2 5.500h8v8H2z', 'none', B, .9) + p('M2 5.500L5.500 2M10 5.500L13.500 2M10 13.500L13.500 10M2 13.500L5.500 10', 'none', B, .9) + (extra || '');
const eye = p('M4 12q5-4.500 10 0q-5 4-10 0z', '#fff', '#445', .8) + c(9, 12, 1.900, '#34558c') + c(9, 12, .9, '#112');
const cursor = p('M8 5v9l2.200-2 1.500 3.300 1.600-.7-1.400-3.100h2.800z', '#fff', '#444', .8);
const wand = p('M9 5l6 7', 'none', '#555', 1.600) + p('M9 0l1 3 3-1-2 2.500 2 2.500-3-1-1 3-1-3-3 1 2-2.500-2-2.500 3 1z', '#fae87a', '#e0c040', .4);
const hex = (a, b, d) => p('M4 1.500h8l4 6.500-4 6.500H4L0 8z', a) + p('M4 1.500h8L8 8z', b) + p('M16 8l-4 6.500L8 8z', d) + p('M4 14.500h8L8 8z', '#5fd0fa') + p('M4 1.500h8l4 6.500-4 6.500H4L0 8zM0 8h16M4 1.500l8 13M12 1.500l-8 13', 'none', '#5688ae', .4);
const pencil = p('M7 11L14 2l2 1.500L9 12l-3 2z', '#e5a857', '#634119', .6) + p('M14 2l1-1.500L17 2l-1 1.500z', '#cf4440');
const thinPencil = p('M8 8.500L13.500 1.500l1.200 1L9.200 9.500 7 10.500z', '#e5a857', '#634119', .4) + p('M13.500 1.500l.7-1 1.300 1-.8 1z', '#cf4440');
const planeIcon = p('M2 13.500Q3 6 8 3L13.500 2v11.500z', '#a9e5b4', '#359848', 1) + p('M8 3v10.500M3 9h10.500', 'none', '#359848', .9);
const axis = p('M8 9V2', 'none', '#2440a0', 1.400) + p('M8 9L2 13', 'none', '#238a44', 1.400) + p('M8 9l6 4', 'none', '#e3543c', 1.400) + p('M6.500 4L8 1l1.500 3z', '#2440a0') + p('M1 14l2-3 1 2z', '#238a44') + p('M15 14l-3-.500 1-2z', '#e3543c');
const thinAxis = p('M8 9L2 13', 'none', '#238a44', .6) + p('M8 9l6 4', 'none', '#e3543c', .6) + p('M8 9V1', 'none', '#2440a0', .6) + p('M7 3L8 .500 9 3z', '#2440a0') + p('M1 14l1.500-2 .8 1.300z', '#238a44') + p('M15 14l-2-.500.700-1.400z', '#e3543c');
const dia = (a, b, s) => p('M8 1l7 7-7 7-7-7z', a, s, .6) + p('M8 1l7 7H8zM1 8h7v7z', b);
const extrude = (a, d) => p('M2 9l3-2h10v5l-3 2H2z', '#5f86b8', '#3f6392', .7) + p('M5 3l1-1h6v7l-1 1H5z', a, d, .8) + p('M5 3h6v7', 'none', d, .6);
const revolve = (a, s) => p('M1 9q1-6 6-5v5q-3-2-6 3zM15 9q-1-6-6-5v5q3-2 6 3z', a, s, .8) + p('M8 1v14', 'none', '#d44', .8);
const loft = (a, s) => p('M5 2h6l-1 8 3 3H3l3-3z', a, s, .8) + p('M5 5h6M5 8h6', 'none', '#c54e28', 1) + p('M3 13h10v1.500H3z', s);
const sweep = (a, s) => p('M14 2H8q-6 1-6 6t6 6h6v-4H9q-3 0-3-2t3-2h5z', a, s, .9) + p('M11 2v4M11 10v4', 'none', s, .8);
const grayBox = cube('#d5d5d5', '#eee', '#aaa', '#8b8b8b', .7);
const darkBox = cube('#999', '#bbb', '#777', '#666', .7);
const pages = p('M2 2h8v8H2z', '#eee', '#888') + p('M5 5h8v8H5z', '#bbb', '#777', .9);
const sheet = p('M3 2h10v9l-3 3H3z', '#f4f4f0', '#999', .9) + p('M10 14v-3h3', '#ccc', '#999', .8);
const lens = p('M9.500 9.500l4 4', 'none', '#777', 2.200) + c(7, 6.500, 4, '#e3eef8', '#777', 1.300);
const layers = p('M2 2h7l3 3v5H5L2 8z', '#6f94c4', '#46689a', .8) + p('M4 4h7l3 3v5H7L4 10z', '#a5c0e0', '#46689a', .8);
const dotsAt = (list, col, r = 1.300) => list.map(([x, y]) => c(x, y, r, col)).join('');
const ringDots = (col, r) => dotsAt([[8, 2], [12, 4], [14, 8], [12, 12], [8, 14], [4, 12], [2, 8], [4, 4]], col, r);
const cloudDots = (col, r = 1.300, hole = 'none') => [[5, 3], [11, 3], [2, 8], [8, 8], [14, 8], [5, 13], [11, 13]].map(([x, y]) => c(x, y, r, hole, col, 1)).join('');
const squares = (a, b, d, e) => p('M2 2h5v5H2z', a) + p('M9 2h5v5H9z', b) + p('M2 9h5v5H2z', d) + p('M9 9h5v5H9z', e);
const ball = c(8, 8, 6.500, '#71b5ee', '#3d7bb5', .7) + p('M8 8L2 5q3-5 8-3z', '#bfe0fa') + p('M8 8l6 3q-3 4-7 3z', '#4c8fd0');
const triangle = p('M2 13L8 2l5 11z', '#8fb8e8', B, .9);
const mirror = p('M7 2v12H1z', '#779fd0', B, .7) + p('M9 2v12h6z', '#e5edf7', B, .7);
const stamp = p('M3 13h10v2H3zM5 8l6-1 1 4H4zM7 2h4v3L9 8 6 6z', '#a7a7a7', '#777', .7);

const icons = {
  mesh: hex('#8abbe0', '#bcdcf0', '#4a84c0'),
  regions: hex('#b9d3b4', '#f1bcc8', '#5fb04a') + p('M4 14.500h8L8 8z', '#f4f4f0') + p('M5.500 14.500h5L8 8z', '#ee4024'),
  cloud: cloudDots('#8c2f96', 1.100, '#fff'),
  meshSketch: p('M0 13h16M3 0v16', 'none', '#aaa', .3) + `<g transform="translate(1.500 4) scale(.65)">${hex('#8abbe0', '#a5cdee', '#4a84c0')}</g>` + thinPencil,
  sketch: p('M0 12h16M3 0v16', 'none', '#aaa', .3) + c(7, 6, 3.500, 'none', '#444', .6) + p('M8 9h4v5H8z', '#eee', '#444', .5) + thinPencil,
  meshSketch3d: thinAxis + `<g transform="translate(2.500 4.500) scale(.6)">${hex('#8abbe0', '#a5cdee', '#4a84c0')}</g>` + thinPencil,
  sketch3d: thinAxis + thinPencil,
  plane: planeIcon, vector: p('M2 14L13 2', 'none', '#49a05a', 1.200).replace('/>', ' stroke-dasharray="3 1.500"/>'), points: [[5, 4], [11, 7], [5, 12]].map(a => c(a[0], a[1], 1.800, '#cfeed4', '#49a05a')).join(''),
  extrude: extrude('#49b05a', '#2c7a3a'), extrudeY: extrude('#f4cf62', '#a3802c'), extrudeWand: extrude('#49b05a', '#2c7a3a') + wand,
  revolve: revolve('#6cc070', '#2f803c'), revolveY: revolve('#f0bd52', '#a3802c'), revolveWand: revolve('#6cc070', '#2f803c') + wand,
  loft: loft('#55b060', '#2f803c'), loftY: loft('#f4cf62', '#b0782c'), loftWand: loft('#f4cf62', '#b0782c') + wand,
  sweep: sweep('#6cc070', '#2f803c'), sweepY: sweep('#f4d580', '#a3802c'), sweepWand: sweep('#6cc070', '#2f803c') + wand,
  boolA: p('M2 3q3-2 6 0v7q-3 2-6 0z', '#ddd', '#999') + c(11, 10, 3.500, '#eee', '#999'),
  boolB: p('M2 3q3-2 6 0v7q-3 2-6 0z', '#ccc', '#888') + c(11, 10, 3.500, '#ccc', '#888') + p('M9 9l4 4', 'none', '#777'),
  fit: ball + p('M0 0h3v3H0zM13 0h3v3h-3zM0 13h3v3H0zM13 13h3v3h-3z', '#223'),
  target: p('M8 1l7 7-7 7-7-7z', '#79abdf', '#3f6aa8') + p('M8 4l4 4-4 4-4-4z', '#ffd34e', '#e0542c', 1.400),
  chamfer: p('M2 6l4-4h8v8l-4 4H2z', '#c4c4c4', '#aaa') + p('M4 7h6v6H3z', '#e4e4e4'), fillet: p('M2 8q2-6 6-6h3l4 4v6l-4 2H2z', '#bcbcbc', '#aaa') + p('M7 8l4-3 3 2v5l-4 2H7z', '#d4d4d4'), draft: p('M8 1l6 11-6 3-6-3z', '#c9c9c9', '#aaa', .7) + p('M8 1v14l6-3z', '#a8a8a8'),
  union: pages, cut: p('M2 3h6v7H2z', '#eee', '#999') + p('M7 5l6 1v8l-6-2z', '#aaa', '#888'),
  join: p('M2 12V8l4-5 3 1v4zM8 13V8l4-5 2 1v6z', '#bbb', '#777', .9), trim: p('M2 6h5v8H2zM9 6h5v8H9z', '#ddd', '#888') + p('M3 2l10 10M13 1L5 9', 'none', '#777'),
  add: p('M2 9h6v5H2zM8 11h6v3H8z', '#bbb', '#888') + p('M11 2v7M8 5h6', 'none', '#666'),
  surf: p('M1 13L4 4q4-3 10-1l-3 7q-5-2-10 3z', '#f4cf52', '#b5822c') + p('M1 14l10-3 3-2-3 5z', B),
  shell: cube('#ddd', '#fff', '#888', '#666', .9), split: p('M2 3h5v10H2zM9 3h5v10H9z', '#aaa', '#888'), wrap: p('M3 6l9-2 2 7-9 3z', '#eee', '#777') + p('M8 8V1M6 3l2-2 2 2', 'none', '#333'),
  move: grayBox + p('M11 0v6M8 3h6', 'none', '#777', 1.500), delFace: grayBox + p('M10 0l5 5M15 0l-5 5', 'none', '#111', 1.500), moveD: darkBox + p('M11 0v6M8 3h6', 'none', '#666', 1.500), delFaceD: darkBox + p('M10 0l5 5M15 0l-5 5', 'none', '#111', 1.500),
  mirror: p('M6 3v10H1z', '#eee', '#333') + p('M8 1v14', 'none', '#555', .8) + p('M10 3v10h5z', '#ddd', '#aaa'),
  grid: dotsAt([[3, 3], [8, 3], [13, 3], [3, 8], [8, 8], [13, 8], [3, 13], [8, 13], [13, 13]], '#888', 1.100), ring: ringDots('#777', 1.100),
  bound: c(8, 8, 4, '#ddd', '#bbb') + p('M0 0h3v3H0zM13 0h3v3h-3zM0 13h3v3H0zM13 13h3v3h-3z', '#555') + c(8, 8, 1, '#aaa'),
  diamondStar: p('M8 2l7 6-7 7-7-7z', '#79abdf', B) + p('M8 2v13', 'none', '#dceafa') + c(12, 4, 3, '#fae05a'),
  page: sheet, import: sheet + p('M0 6h5V3l5 5-5 5v-3H0z', '#dd2430'), save: p('M1 3h11v11H1z', '#4a6296', '#334670') + p('M3 3h7v4H3zM4 9h6v5H4z', '#eee') + p('M12 2h3v10h-2', 'none', '#777'),
  exportG: p('M1 9h13v4H1z', '#ccc', '#888') + p('M5 9V5h4V2l4 4-4 3', '#bbb', '#888'), open: p('M1 7h13l-2 7H1z', '#f4cf52', '#ab852c') + p('M4 7V5h4V2l5 4-5 4V8', '#4cae4c', '#2c7a3a', .6),
  folderGear: p('M1 4h5l1 2h7v7H1z', '#f1d78a', '#ab852c', .8) + c(11, 11, 3.500, '#aaa', '#666', .8) + c(11, 11, 1.200, '#fff'),
  undo: p('M2 7l5-5v3q7 0 5 8-1-4-5-4v3z', '#444'), redo: p('M14 7L9 2v3q-7 0-5 8 1-4 5-4v3z', '#444'), refreshG: c(8, 8, 6.500, '#fff', '#e2343c', 1.600) + p('M11 6q-4-3-6 1 0 5 4 4.500l2-3H8', 'none', '#e2343c', 1.600),
  layersEye: layers + eye, layersHide: layers + p('M4 13q4-5 10 0z', '#222e44'), starEye: p('M7 0l2 5 5 0-4 3 1 5-4-3-4 3 1-5-4-3h5z', '#f7c437', '#dc932c', .5) + eye,
  zoomFit: p('M1 1h11v11H1z', '#e5e8ee', '#666', .8).replace('/>', ' stroke-dasharray="2 1"/>') + lens, zoomOut: lens + p('M1 13h6', 'none', '#999'), zoomArea: lens + p('M1 3h8v9H1z', 'none', '#e02020').replace('/>', ' stroke-dasharray="2 1"/>'), zoomIn: p('M1 1h9v9H1z', '#dfe', '#888', .8) + lens + p('M5 6.500h4M7 4.500v4', 'none', '#377'),
  crossDots: dotsAt([[8, 1], [8, 4.500], [8, 8], [8, 11.500], [8, 15], [1, 8], [4.500, 8], [11.500, 8], [15, 8], [5, 5], [11, 5], [5, 11], [11, 11]], '#8b3f92', 1.400),
  diaWire: p('M8 1l7 7-7 7-7-7zM1 8h14M8 1v14', 'none', '#8b3f92', .9), diaShade: dia('#9c4fa4', '#c58fca', '#6c2f76'), diaDark: dia('#7c3584', '#b06fb8', '#5c2566'), diaHeat: dia('#f2d832', '#f08a1c', '#e8842c') + p('M8 4l4 4-4 4-4-4z', '#ee2a18'), diaCurv: dia('#d6e8d6', '#86b88c', '#667') + p('M8 8h7l-7 7z', '#f08068'),
  boxOr: p('M2 9l3-2h10v5l-3 2H2z', '#5f86b8', '#3f6392', .7) + p('M5 2h6l1 7-1 1H5z', '#f0832c', '#a04a10', .8), boxPu: p('M1 8l6-6h7v6l-6 7z', '#a068aa', '#704078', .7) + p('M7 2h7v6l-5-1z', '#7ea5d8'),
  wire: wire(), hidden: cube('none', 'none', 'none', B), shade: cube('#7fa6dc', '#b5cdec', '#3f6aa8', '#456a9f', .7), shadeDark: cube('#41699f', '#7598c8', '#2c4c7c', '#2c4c7c', .7), shadeEdge: cube('#41699f', '#7598c8', '#2c4c7c', '#122c54', 1.100),
  vFront: wire(p('M2 5.500h8v8H2z', '#7fa6dc88')), vBack: wire(p('M5.500 2h8v8h-8z', '#7fa6dc88')), vLeft: wire(p('M2 5.500L5.500 2v8L2 13.500z', '#7fa6dc88')), vRight: wire(p('M10 5.500L13.500 2v8L10 13.500z', '#7fa6dcaa')), vTop: wire(p('M2 5.500L5.500 2h8L10 5.500z', '#7fa6dcaa')), vBottom: wire(p('M2 13.500l3.500-3.500h8L10 13.500z', '#7fa6dcaa')), vIso: cube('#9fbbe0', '#c8d8ee', '#7598c8', B),
  flipA: mirror + p('M6 4h4V1l5 4-5 4V6H6z', '#3fa64c'), flipB: mirror + p('M10 4H6V1L1 5l5 4V6h4z', '#3fa64c'), flipC: p('M8 1v13H2z', '#5b84bd', B, .7) + p('M8 1v13h5z', '#a9c3e4', B, .7), normal: p('M2 9h12l-2 5M4 9l-2 5M8 9v5', 'none', B, 1.200) + p('M8 9V2M5.500 4L8 1l2.500 3', 'none', '#111', 1.300),
  eMesh: hex('#8abbe0', '#bcdcf0', '#4a84c0') + eye, eRegion: hex('#b9d3b4', '#d8c8c8', '#5fb04a') + eye, eCloud: dotsAt([[3, 2], [8, 2], [13, 2], [1, 7], [14, 7], [3, 12]], '#8c2f96', 1.200) + eye, eSurf: p('M1 10L4 4q5-4 10 0l-2 7z', '#5b84bd', B) + eye, eSolid: cube('#7fa6dc', '#b5cdec', B, B, .6) + eye,
  eSketch: c(6, 7, 4, 'none', '#777') + pencil + eye, eSketch3: axis + pencil + eye, ePoints: [[3, 4], [8, 2], [13, 5], [3, 10]].map(a => c(a[0], a[1], 1.600, '#cfe', '#49a05a')).join('') + eye, eLine: p('M3 13L11 1', 'none', '#49a05a', 1.200) + eye, ePlane: planeIcon + eye, eCurve: p('M2 2q10-2 11 8', 'none', '#456', 1.200) + eye, eAxis: axis + eye, eRuler: p('M1 2v5M15 2v5M1 4h14', 'none', '#111', 1.800) + eye,
  pin: p('M5 2h6M6 2v6M10 2v6M3 8.500h10M8 9v5', 'none', '#666', 1.500), cross: p('M3 3l10 10M13 3L3 13', 'none', '#555', 1.800),
  axis, ball, pen: p('M2 2v11l8 1', 'none', B, 1.400) + p('M2 6h4M2 10h4', 'none', B) + pencil,
  eyeSm: p('M1 8q7-9 14 0-7 9-14 0z', 'none', '#444', 1.600) + c(8, 8, 3.500, '#222'), eyeOff: p('M2 2h12v9H2zM3 14h10', 'none', '#777', 2),
  treeTab: p('M1 3h5v5H1z', '#fff', '#666') + p('M6 5h4M8 5v9h3M8 9h3', 'none', '#333') + p('M11 2h4v4h-4z', '#2c50a0') + p('M11 7h4v3h-4z', '#3f9a4c') + p('M11 12h4v3h-4z', '#e08020'), help: p('M4 6q0-5 4.500-4T11 6q-2 2-2.500 5', 'none', '#2f803c', 3.400) + p('M4 6q0-5 4.500-4T11 6q-2 2-2.500 5', 'none', '#d8f2dc', 1.500) + c(8.500, 14, 1.600, '#9c9', '#2f803c'),
  back: p('M2 8l5-5v3h7v4H7v3z', '#f4f0a0', '#222', 1.200), ok: p('M2 8l4 5 8-12', 'none', '#fff', 4) + p('M2 8l4 5 8-12', 'none', '#e2502c', 2.400), no: p('M3 3l10 10M13 3L3 13', 'none', '#fff', 4.500) + p('M3 3l10 10M13 3L3 13', 'none', '#f06030', 2.500),
  dots: c(8, 8, 2.500, '#fff', '#444', 1.200) + dotsAt([[2, 3], [6, 2], [11, 2], [14, 5], [14, 11], [10, 14], [5, 14], [2, 10]], '#444', 1.100), curl: p('M1 7l5-5v3q9-1 9 9h-3q0-6-6-5v3z', '#fff', '#555', 1), swap: p('M0 8l5-5v10z', '#2cb03c', '#111') + p('M16 8l-5-5v10z', '#f1f4b0', '#111') + p('M4 8h8M8 3v10', 'none', '#111', 1.500),
  segment: p('M3 13L13 3', 'none', '#889', 1).replace('/>', ' stroke-dasharray="2 2"/>') + dotsAt([[3, 13], [13, 3]], '#567', 1.200), rect: p('M3 3h10v10H3z', '#c3f0f2', '#678') + dotsAt([[3, 3], [13, 13], [13, 3], [3, 13]], '#357', 1.500),
  circleG: c(8, 8, 6, '#f8f8f8', '#bbb') + c(8, 8, 1, '#888'), polyG: p('M8 2l6 5-2 7H4L2 7z', '#f8f8f8', '#bbb') + c(8, 8, 1, '#888'), ellipseG: p('M3 12q-2-5 5-8t6 1q0 6-7 8z', '#f8f8f8', '#bbb') + c(8, 8, 1, '#888'),
  spray: p('M2 7h8v7H2z', '#777', '#444') + p('M4 7V4h4v3M9 5l5-3M11 7l4 1', 'none', '#666', 1.400), bucket: p('M2 9l6-6 5 6-6 5z', '#eee', '#777') + p('M4 7V2l3 3M13 9v4', 'none', '#777', 1.400), stampA: stamp, stampB: stamp + p('M2 5l4-3', 'none', '#555'),
  cubeG: cube('none', 'none', 'none', '#bbb'), cylG: p('M3 3h10v10H3zM3 6h10M3 10h10', 'none', '#bbb'), ballG: c(8, 8, 6, '#f4f4f4', '#bbb') + p('M2 8h12M8 2v12', 'none', '#bbb'), pageEye: p('M2 2h9v9H2z', '#eee', '#aaa') + eye,
  filter: p('M4 1v14M12 1v14M1 4h14M1 12h14M4 12l8-8', 'none', '#888', 1.100) + dotsAt([[4, 12], [8, 8], [12, 4]], '#a03fa8', 1.500),
  cMesh: p('M4 2h6l4 5-4 6H4L0 7z', '#ddd', '#999') + cursor, cRegion: hex('#b9d3b4', '#e8b8b0', '#5fb04a') + p('M4 14.500h8L8 8z', '#e8603c') + cursor, cTri: triangle + cursor, cTriR: p('M2 13L8 2l5 11z', 'none', B) + dotsAt([[2, 13], [8, 2], [13, 13]], '#e33030', 1.500) + cursor, cBall: c(7, 7, 5.500, '#eee', '#aaa') + cursor, cBox: grayBox + cursor,
  cFace: cube('#7fa6dc', '#e8482c', B, B, .6) + cursor, cEdge: cube('#7fa6dc', '#b5cdec', B, B, .6) + p('M2 5.500L5.500 2h8', 'none', '#e33', 1.200) + cursor, cLine: cube('#7fa6dc', '#b5cdec', B, B, .6) + p('M10 5.500L13.500 2', 'none', '#e33', 1.500) + cursor, cPoint: cube('#7fa6dc', '#b5cdec', B, B, .6) + c(10, 5.500, 1.800, '#e33') + cursor,
  cPlane: planeIcon + cursor, cPen: p('M1 2v10h10', 'none', '#777') + pencil + cursor, cRuler: p('M1 1v4M15 1v4M1 3h14M4 13h6', 'none', '#333', 1.500) + cursor, cPages: p('M2 2h6v8H2zM6 5h6v8H6z', '#eee', '#888') + cursor,
  sqOff: squares('#ccc', '#aaa', '#999', '#aaa') + p('M3 3l10 10M13 5L5 13', 'none', '#888'), sqOn: squares('#d5e2f4', '#3f6aa8', '#f8d46a', '#6cc040') + p('M2 2h5v5H2z', 'none', B) + p('M4 8l3.500 3.500L4 15 .500 11.500z', '#dd2430'), sqRed: squares('#fff0', B, '#f0a030', '#7cc840') + c(4, 4, 3, '#dd2430'), sqHand: squares('#fff0', B, '#f0a030', '#7cc840') + p('M1 9V4l3-2 5 2v5L5 12z', '#eeb56a', '#8c5c1c', .9), sqTree: squares('#a8c0e0', '#fff0', '#fff0', '#7cc840') + p('M9 6h5v3H9zM4 9h4v3H4z', B) + p('M5 5l6 5', 'none', '#555'),
  meshBall: hex('#8abbe0', '#9fd080', '#e0b050') + p('M11 8l3 5h-5z', '#555'), nodes: p('M2 4h12v8H2zM2 12l6-8 6 8', 'none', '#999') + dotsAt([[2, 4], [14, 4], [2, 12], [14, 12]], '#888', 1.500), sqG: squares('#ccc', '#888', '#888', '#777') + c(4, 4, 3, '#eee', '#888'), list: p('M1 3h9M1 6h9M1 9h9', 'none', '#777', 1.500) + p('M9 9h6M9 12h6M11 7v8', 'none', '#888', 1.200), cup: p('M3 2h10l-2 6H5zM7 8h2v4H7zM4 12h8v2H4z', '#b8cbe4', '#567'),
  bars: p('M3 14V9M7 14V7M11 14V9', 'none', '#222', 1.500) + dotsAt([[3, 7], [7, 5], [11, 7]], '#222', 1.500) + p('M10 5l4-3v7', 'none', B, 1.200), cloudM: dotsAt([[2, 7], [7, 8], [13, 9], [4, 13], [10, 13], [3, 3]], '#8c2f96', 1.300) + p('M10 1v6M7 4h6', 'none', '#555'), linkG: c(5, 5, 3.500, '#eee', '#999') + c(11, 11, 3.500, '#eee', '#999') + p('M6 6l4 4', 'none', '#777', 1.500), cutG: pages + p('M8 7h5v6H8z', '#888')
};

const draw = name => `<svg viewBox="0 0 16 16">${icons[name]}</svg>`;

document.querySelectorAll('[data-icon]').forEach(el => { el.innerHTML = draw(el.dataset.icon); });

document.querySelectorAll('[data-icons]').forEach(bar => {
  bar.innerHTML = bar.dataset.icons.split(' ').map(name => {
    if (name === '|') return '<span class="sep"></span>';
    const key = name.replace('*', '');
    const on = key !== name ? ' active' : '';
    return `<button class="tool${on}" aria-label="${key}"><i>${draw(key)}</i></button>`;
  }).join('');
});
```
